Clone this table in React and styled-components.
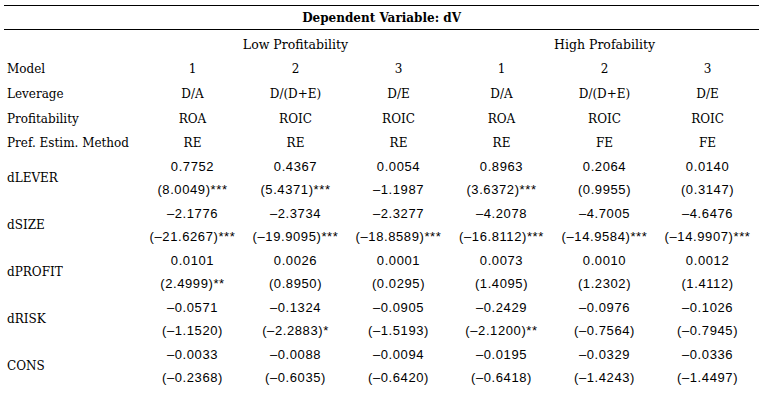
import styled, { createGlobalStyle } from "styled-components";

const Global = createGlobalStyle`
  body {
    margin: 0;
    background: #ffffff;
  }
`;

const Page = styled.div`
  width: 764px;
  height: 410px;
  padding: 5px 0 0 4px;
  box-sizing: border-box;
  background: #fff;
  color: #000;
`;

const Table = styled.table`
  border-collapse: collapse;
  table-layout: fixed;
  width: 755px;
  font-family: "DejaVu Serif", "Liberation Serif", serif;
  font-size: 12px;
`;

const TitleCell = styled.th`
  border-top: 1px solid #000;
  border-bottom: 1px solid #000;
  height: 23px;
  padding: 0;
  font-weight: bold;
  text-align: center;
`;

const Row = styled.tr`
  height: ${(p) => p.$h || 25}px;
`;

const Label = styled.td`
  padding: 0 0 0 3px;
  text-align: left;
  vertical-align: middle;
  white-space: nowrap;
`;

const Cell = styled.td`
  padding: 0;
  text-align: center;
  vertical-align: middle;
  white-space: nowrap;
`;

const GroupCell = styled(Cell)`
  padding-top: 3px;
  font-size: 12.5px;
`;

const Num = styled(Cell)`
  font-family: "Liberation Sans", Arial, sans-serif;
  font-size: 13px;
  letter-spacing: 0.6px;
`;

const groups = ["Low Profitability", "High Profability"];

const specs = [
  ["Model", ["1", "2", "3", "1", "2", "3"]],
  ["Leverage", ["D/A", "D/(D+E)", "D/E", "D/A", "D/(D+E)", "D/E"]],
  ["Profitability", ["ROA", "ROIC", "ROIC", "ROA", "ROIC", "ROIC"]],
  ["Pref. Estim. Method", ["RE", "RE", "RE", "RE", "FE", "FE"]],
];

const results = [
  [
    "dLEVER",
    ["0.7752", "0.4367", "0.0054", "0.8963", "0.2064", "0.0140"],
    ["(8.0049)***", "(5.4371)***", "–1.1987", "(3.6372)***", "(0.9955)", "(0.3147)"],
  ],
  [
    "dSIZE",
    ["–2.1776", "–2.3734", "–2.3277", "–4.2078", "–4.7005", "–4.6476"],
    ["(–21.6267)***", "(–19.9095)***", "(–18.8589)***", "(–16.8112)***", "(–14.9584)***", "(–14.9907)***"],
  ],
  [
    "dPROFIT",
    ["0.0101", "0.0026", "0.0001", "0.0073", "0.0010", "0.0012"],
    ["(2.4999)**", "(0.8950)", "(0.0295)", "(1.4095)", "(1.2302)", "(1.4112)"],
  ],
  [
    "dRISK",
    ["–0.0571", "–0.1324", "–0.0905", "–0.2429", "–0.0976", "–0.1026"],
    ["(–1.1520)", "(–2.2883)*", "(–1.5193)", "(–2.1200)**", "(–0.7564)", "(–0.7945)"],
  ],
  [
    "CONS",
    ["–0.0033", "–0.0088", "–0.0094", "–0.0195", "–0.0329", "–0.0336"],
    ["(–0.2368)", "(–0.6035)", "(–0.6420)", "(–0.6418)", "(–1.4243)", "(–1.4497)"],
  ],
];

export default function App() {
  return (
    <Page>
      <Global />
      <Table>
        <colgroup>
          <col style={{ width: 137 }} />
          {[0, 1, 2, 3, 4, 5].map((i) => (
            <col key={i} style={{ width: 103 }} />
          ))}
        </colgroup>
        <thead>
          <tr>
            <TitleCell colSpan={7}>Dependent Variable: dV</TitleCell>
          </tr>
        </thead>
        <tbody>
          <Row $h={27}>
            <Label />
            {groups.map((g) => (
              <GroupCell key={g} colSpan={3}>
                {g}
              </GroupCell>
            ))}
          </Row>
          {specs.map(([name, vals]) => (
            <Row key={name} $h={name === "Pref. Estim. Method" ? 23 : 25}>
              <Label>{name}</Label>
              {vals.map((v, i) => (
                <Cell key={i}>{v}</Cell>
              ))}
            </Row>
          ))}
          {results.map(([name, coef, stat]) => [
            <Row key={name + "a"} $h={23}>
              <Label rowSpan={2}>{name}</Label>
              {coef.map((v, i) => (
                <Num key={i}>{v}</Num>
              ))}
            </Row>,
            <Row key={name + "b"} $h={24}>
              {stat.map((v, i) => (
                <Num key={i}>{v}</Num>
              ))}
            </Row>,
          ])}
        </tbody>
      </Table>
    </Page>
  );
}
